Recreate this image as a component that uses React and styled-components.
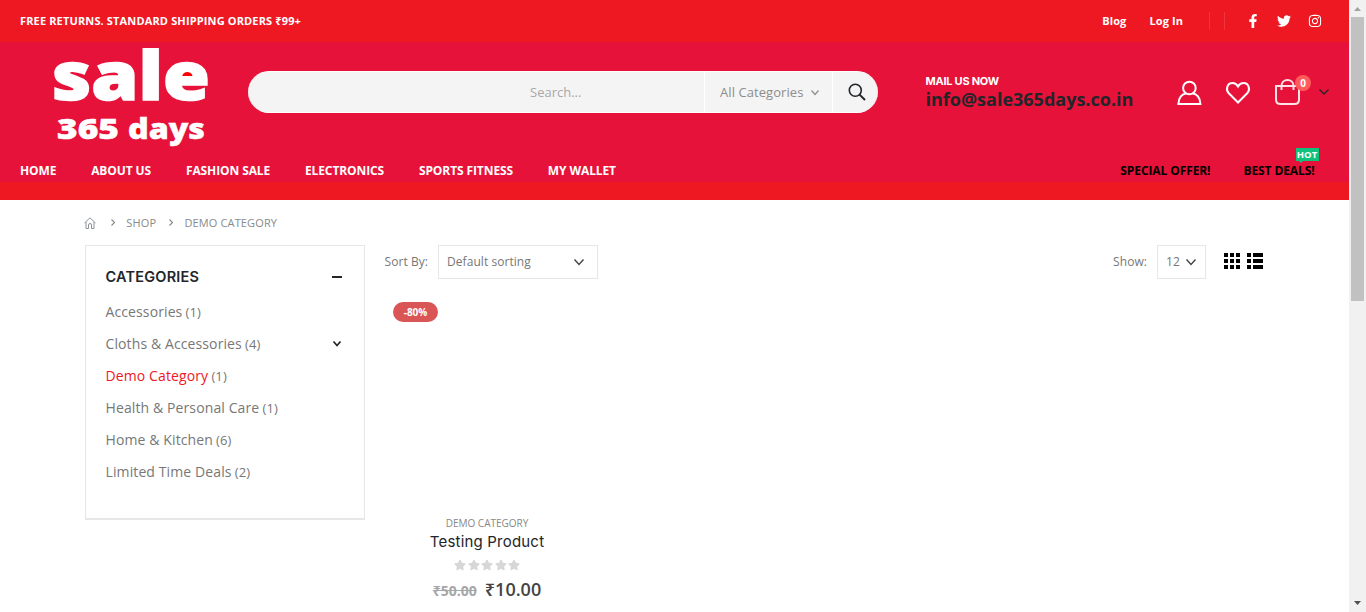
import React from "react";
import styled, { createGlobalStyle } from "styled-components";
import { FaFacebookF, FaTwitter, FaInstagram, FaStar } from "react-icons/fa";

const GlobalStyle = createGlobalStyle`
  * { box-sizing: border-box; }
  body {
    margin: 0;
    background: #fff;
    color: #777;
    font-family: "Open Sans", "Noto Sans", "Liberation Sans", sans-serif;
    overflow: hidden;
  }
`;

const Window = styled.div`
  display: flex;
  width: 1366px;
  height: 612px;
  overflow: hidden;
`;
const Page = styled.div`
  flex: 1;
  min-width: 0;
`;

const ScrollTrack = styled.div`
  display: flex;
  flex-direction: column;
  align-items: center;
  justify-content: space-between;
  width: 17px;
  background: #f1f1f1;
`;
const ScrollArrow = styled.svg`
  display: block;
  width: 17px;
  height: 17px;
  fill: ${(p) => p.$color};
`;
const ScrollThumb = styled.div`
  width: 13px;
  height: 284px;
  margin-bottom: auto;
  background: #c1c1c1;
`;

const Header = styled.header`
  height: 200px;
  background: #ee1823;
`;
const TopBar = styled.div`
  display: flex;
  align-items: center;
  height: 42px;
  padding: 0 27px 0 20px;
  color: #fff;
  font-size: 11px;
  font-weight: 700;
  line-height: 16px;
`;
const Notice = styled.span`
  margin-right: auto;
  letter-spacing: 0.145px;
`;
const TopLink = styled.a`
  margin-right: ${(p) => p.$gap}px;
  color: #fff;
  letter-spacing: 0.1px;
`;
const Separator = styled.span`
  width: 1px;
  height: 18px;
  margin-right: ${(p) => p.$gap}px;
  background: rgba(255, 255, 255, 0.12);
`;
const Socials = styled.div`
  display: flex;
  align-items: center;
  gap: 17px;
  svg { display: block; }
`;

const Middle = styled.div`
  height: 140px;
  background: #e71239;
`;
const BrandRow = styled.div`
  display: flex;
  height: 106px;
`;
const Logo = styled.svg`
  width: 170px;
  height: 106px;
  margin-left: 45px;
  flex: none;
  overflow: visible;
  font-family: "Open Sans", "Noto Sans", sans-serif;
  font-weight: 800;
  fill: #fff;
`;
const SearchBox = styled.form`
  display: flex;
  width: 630px;
  height: 42px;
  margin: 29px 0 0 33px;
  border-radius: 21px;
  border-top: 1px solid #fff;
  border-bottom: 1px solid #fff;
  background: #f4f4f4;
  overflow: hidden;
  font-size: 13px;
  line-height: 40px;
`;
const SearchField = styled.div`
  flex: 1;
  padding-left: 282px;
  color: #a8a8a8;
`;
const SearchSelect = styled.div`
  display: flex;
  align-items: center;
  justify-content: space-between;
  width: 129px;
  padding: 0 13px 0 15px;
  border: solid #fff;
  border-width: 0 1px;
  color: #8d8d8d;
  letter-spacing: 0.07px;
`;
const SearchButton = styled.div`
  display: flex;
  align-items: center;
  width: 45px;
  padding-left: 15px;
`;
const Contact = styled.div`
  width: 251px;
  margin: 32px 0 0 47px;
`;
const ContactLabel = styled.div`
  padding-left: 0.5px;
  color: #fff;
  font-family: Inter, "Liberation Sans", sans-serif;
  font-size: 11px;
  font-weight: 700;
  line-height: 14px;
  letter-spacing: -0.25px;
`;
const ContactMail = styled.div`
  padding-left: 0.5px;
  color: #222529;
  font-size: 18px;
  font-weight: 700;
  line-height: 22px;
`;
const HeaderIcons = styled.div`
  display: flex;
  align-items: flex-start;
  padding-top: 35px;
  fill: none;
  stroke: #fff;
  svg { display: block; overflow: visible; flex: none; }
`;
const CartWrap = styled.div`
  position: relative;
  margin-left: 25px;
`;
const CartCount = styled.span`
  position: absolute;
  top: -2px;
  left: 20px;
  width: 16px;
  height: 16px;
  border-radius: 50%;
  background: #ff5b5b;
  color: #fff;
  font-size: 10px;
  font-weight: 700;
  line-height: 16px;
  text-align: center;
`;

const Nav = styled.nav`
  display: flex;
  padding: 14px 34.5px 0 20px;
  font-size: 12px;
  font-weight: 700;
  line-height: 18px;
  letter-spacing: -0.1px;
  white-space: nowrap;
`;
const NavItem = styled.a`
  position: relative;
  margin-right: ${(p) => p.$gap ?? 34.8}px;
  margin-left: ${(p) => (p.$push ? "auto" : "0")};
  color: ${(p) => (p.$dark ? "#000" : "#fff")};
`;
const HotTip = styled.span`
  position: absolute;
  top: -14px;
  right: -4px;
  width: 23px;
  height: 13px;
  background: #0fc37f;
  color: #fff;
  font-size: 9.5px;
  line-height: 13px;
  letter-spacing: 0;
  text-align: center;
  &::after {
    content: "";
    position: absolute;
    top: 13px;
    left: 3px;
    border: solid transparent;
    border-width: 2px 2px 0;
    border-top-color: #0fc37f;
  }
`;

const Breadcrumb = styled.div`
  display: flex;
  align-items: center;
  height: 45px;
  padding-left: 84px;
  color: #8a8a8a;
  font-size: 11px;
  line-height: 16px;
  svg { display: block; flex: none; }
`;
const HomeIcon = styled.svg`
  width: 12px;
  height: 12px;
  margin-right: 15px;
  fill: none;
  stroke: #8d929b;
`;
const Crumb = styled.span`
  margin-right: 13px;
  margin-left: 11.3px;
  letter-spacing: 0.13px;
`;
const Content = styled.div`
  display: flex;
  padding-left: 85px;
`;
const Sidebar = styled.aside`
  width: 280px;
  height: 275px;
  padding: 19px 22px 0 19.5px;
  border: 1px solid #e7e7e7;
  border-bottom-width: 2px;
`;
const SidebarHead = styled.div`
  display: flex;
  align-items: center;
  justify-content: space-between;
  height: 22px;
  margin-bottom: 8px;
  color: #222529;
  font-family: Inter, "Liberation Sans", sans-serif;
  font-size: 14.5px;
  font-weight: 600;
  letter-spacing: 0.2px;
`;
const Minus = styled.span`
  width: 10px;
  height: 2px;
  margin-top: 2px;
  background: #222529;
`;
const CategoryRow = styled.div`
  display: flex;
  align-items: center;
  height: 32px;
  color: ${(p) => (p.$active ? "#ee1823" : "#777")};
  font-size: 14px;
  letter-spacing: 0.11px;
  svg { margin: 0 1.5px 0 auto; }
`;
const Count = styled.span`
  margin-left: 3.2px;
  padding-top: 1px;
  color: #777;
  font-size: 13px;
`;
const Main = styled.main`
  width: 899px;
  padding-left: 19.5px;
`;
const Toolbar = styled.div`
  display: flex;
  align-items: center;
  height: 34px;
  font-size: 12px;
  letter-spacing: 0.06px;
`;
const Label = styled.span`
  margin-right: 10px;
  margin-left: ${(p) => (p.$push ? "auto" : "0")};
  padding-bottom: 1px;
`;
const Select = styled.div`
  display: flex;
  align-items: center;
  justify-content: space-between;
  width: ${(p) => p.$width}px;
  height: 34px;
  padding: 0 ${(p) => p.$right}px 1px 8px;
  border: 1px solid #e7e7e7;
`;
const ModeIcons = styled.svg`
  width: 40px;
  height: 16px;
  margin: -2px 0 0 18px;
  fill: #000;
`;
const Product = styled.article`
  display: flex;
  flex-direction: column;
  align-items: center;
  width: 205px;
`;
const Discount = styled.span`
  align-self: flex-start;
  width: 45px;
  height: 20px;
  margin: 23px 0 194px 8.5px;
  border-radius: 10px;
  background: #da5555;
  color: #fff;
  font-size: 10px;
  font-weight: 700;
  line-height: 20px;
  letter-spacing: -0.1px;
  text-align: center;
`;
const ProductCategory = styled.div`
  color: #888;
  font-size: 10px;
  line-height: 14px;
`;
const ProductName = styled.div`
  margin-top: 1px;
  color: #222529;
  font-family: Inter, "Liberation Sans", sans-serif;
  font-size: 15px;
  line-height: 22px;
  letter-spacing: 0.2px;
`;
const Stars = styled.div`
  display: flex;
  gap: 1.5px;
  margin-top: 6px;
  color: #d7d7d7;
  svg { display: block; }
`;
const Prices = styled.div`
  display: flex;
  align-items: baseline;
  gap: 8px;
  margin-top: 6px;
  line-height: 24px;
`;
const OldPrice = styled.del`
  color: #a7a7a7;
  font-size: 14px;
  font-weight: 700;
`;
const NewPrice = styled.span`
  color: #444;
  font-size: 18px;
  font-weight: 600;
`;

function Chevron({ w = 8, h = 5, color, stroke = 1.3, right }) {
  return (
    <svg width={right ? h : w} height={right ? w : h} viewBox={right ? `0 0 ${h} ${w}` : `0 0 ${w} ${h}`}
      fill="none" stroke={color} strokeWidth={stroke} overflow="visible">
      <path d={right ? `M.5 .5L${h - 0.5} ${w / 2}L.5 ${w - 0.5}` : `M.5 .5L${w / 2} ${h - 0.5}L${w - 0.5} .5`} />
    </svg>
  );
}

const HeartIcon = styled.svg`
  width: 24px;
  height: 28px;
  margin-left: 24px;
`;
const CartCaret = styled.svg`
  width: 10px;
  height: 6px;
  margin: 12px 0 0 18px;
  stroke: #222529;
`;

const navItems = ["HOME", "ABOUT US", "FASHION SALE", "ELECTRONICS", "SPORTS FITNESS", "MY WALLET"];
const categories = [
  ["Accessories", 1],
  ["Cloths & Accessories", 4],
  ["Demo Category", 1],
  ["Health & Personal Care", 1],
  ["Home & Kitchen", 6],
  ["Limited Time Deals", 2],
];

export default function App() {
  return (
    <Window>
      <GlobalStyle />
      <Page>
        <Header>
          <TopBar>
            <Notice>FREE RETURNS. STANDARD SHIPPING ORDERS ₹99+</Notice>
            <TopLink $gap={23}>Blog</TopLink>
            <TopLink $gap={26}>Log In</TopLink>
            <Separator $gap={14} />
            <Separator $gap={21} />
            <Socials>
              <FaFacebookF size={14} />
              <FaTwitter size={14} />
              <FaInstagram size={14} />
            </Socials>
          </TopBar>
          <Middle>
            <BrandRow>
              <Logo viewBox="0 0 170 106">
                <ellipse cx="142" cy="31" rx="9" ry="6" fill="#f00" />
                <ellipse cx="93.5" cy="87" rx="5" ry="6" fill="#f00" />
                <text x="7" y="57.5" fontSize="67" textLength="158" lengthAdjust="spacingAndGlyphs" stroke="#fff" strokeWidth="1.6">sale</text>
                <g fontSize="29" stroke="#fff" strokeWidth=".5">
                  <text x="12" y="96.500" textLength="62" lengthAdjust="spacingAndGlyphs">365</text>
                  <text x="83" y="96.500" textLength="77" lengthAdjust="spacingAndGlyphs">days</text>
                </g>
              </Logo>
              <SearchBox>
                <SearchField>Search...</SearchField>
                <SearchSelect>
                  All Categories
                  <Chevron color="#8d8d8d" />
                </SearchSelect>
                <SearchButton>
                  <svg width="18" height="18" viewBox="0 0 18 18" fill="none" stroke="#222529" strokeWidth="1.6">
                    <circle cx="7.3" cy="7.3" r="6" />
                    <path d="M11.6 11.6L17 17" strokeWidth="2" />
                  </svg>
                </SearchButton>
              </SearchBox>
              <Contact>
                <ContactLabel>MAIL US NOW</ContactLabel>
                <ContactMail>info@sale365days.co.in</ContactMail>
              </Contact>
              <HeaderIcons>
                <svg width="26" height="28" viewBox="0 0 26 28" strokeWidth="2">
                  <circle cx="13.4" cy="11" r="6.3" />
                  <path d="M2.4 27C2.4 20.5 6.4 16.8 9.9 16.4M16.9 16.4C20.4 16.8 24.4 20.5 24.4 27H1.4" />
                </svg>
                <HeartIcon viewBox="0 0 24 28" strokeWidth="2">
                  <path d="M12 25.5L2.8 16.2C-.7 12.5 1.2 6 6.5 6C9 6 10.8 7.3 12 9.5C13.2 7.3 15 6 17.5 6C22.8 6 24.7 12.5 21.2 16.2Z" />
                </HeartIcon>
                <CartWrap>
                  <svg width="26" height="28" viewBox="0 0 26 28" strokeWidth="2" opacity=".88">
                    <path d="M1 9H24V22.5Q24 27 19.5 27H5.5Q1 27 1 22.5ZM6.5 13V9C6.500 1 18.5 1 18.5 9V13" />
                  </svg>
                  <CartCount>0</CartCount>
                </CartWrap>
                <CartCaret viewBox="0 0 10 6" strokeWidth="1.3">
                  <path d="M.5 .5L5 5L9.5 .5" />
                </CartCaret>
              </HeaderIcons>
            </BrandRow>
            <Nav>
              {navItems.map((item) => <NavItem key={item}>{item}</NavItem>)}
              <NavItem $dark $push $gap={33}>SPECIAL OFFER!</NavItem>
              <NavItem $dark $gap={0}>BEST DEALS!<HotTip>HOT</HotTip></NavItem>
            </Nav>
          </Middle>
        </Header>
        <Breadcrumb>
          <HomeIcon viewBox="0 0 12 12">
            <path d="M.5 6L6 .8L11.5 6M2 5V11.5H4.5V8Q4.5 6.5 6 6.5T7.5 8V11.5H10V5" />
          </HomeIcon>
          <Chevron right w={7} h={4} color="#888" stroke={1.1} />
          <Crumb>SHOP</Crumb>
          <Chevron right w={7} h={4} color="#888" stroke={1.1} />
          <Crumb>DEMO CATEGORY</Crumb>
        </Breadcrumb>
        <Content>
          <Sidebar>
            <SidebarHead>CATEGORIES<Minus /></SidebarHead>
            {categories.map(([name, count]) => (
              <CategoryRow key={name} $active={name === "Demo Category"}>
                {name}
                <Count>({count})</Count>
                {count === 4 && <Chevron color="#222529" stroke={1.7} />}
              </CategoryRow>
            ))}
          </Sidebar>
          <Main>
            <Toolbar>
              <Label>Sort By:</Label>
              <Select $width={160} $right={13}>
                Default sorting
                <Chevron w={10} h={6} color="#444" stroke={1.4} />
              </Select>
              <Label $push>Show:</Label>
              <Select $width={49} $right={9}>
                12
                <Chevron w={10} h={6} color="#444" stroke={1.4} />
              </Select>
              <ModeIcons viewBox="0 0 40 16">
                {[0, 6, 12].map((y) => (
                  <g key={y}>
                    <rect x="0" y={y} width="4" height="4" />
                    <rect x="6" y={y} width="4" height="4" />
                    <rect x="12" y={y} width="4" height="4" />
                    <rect x="23" y={y} width="4" height="4" />
                    <rect x="29" y={y} width="10" height="4" />
                  </g>
                ))}
              </ModeIcons>
            </Toolbar>
            <Product>
              <Discount>-80%</Discount>
              <ProductCategory>DEMO CATEGORY</ProductCategory>
              <ProductName>Testing Product</ProductName>
              <Stars>
                {[0, 1, 2, 3, 4].map((n) => <FaStar key={n} size={12} />)}
              </Stars>
              <Prices>
                <OldPrice>₹50.00</OldPrice>
                <NewPrice>₹10.00</NewPrice>
              </Prices>
            </Product>
          </Main>
        </Content>
      </Page>
      <ScrollTrack>
        <ScrollArrow $color="#a3a3a3" viewBox="0 0 17 17"><path d="M5 11L8.5 7L12 11Z" /></ScrollArrow>
        <ScrollThumb />
        <ScrollArrow $color="#505050" viewBox="0 0 17 17"><path d="M5 6L8.5 10L12 6Z" /></ScrollArrow>
      </ScrollTrack>
    </Window>
  );
}
